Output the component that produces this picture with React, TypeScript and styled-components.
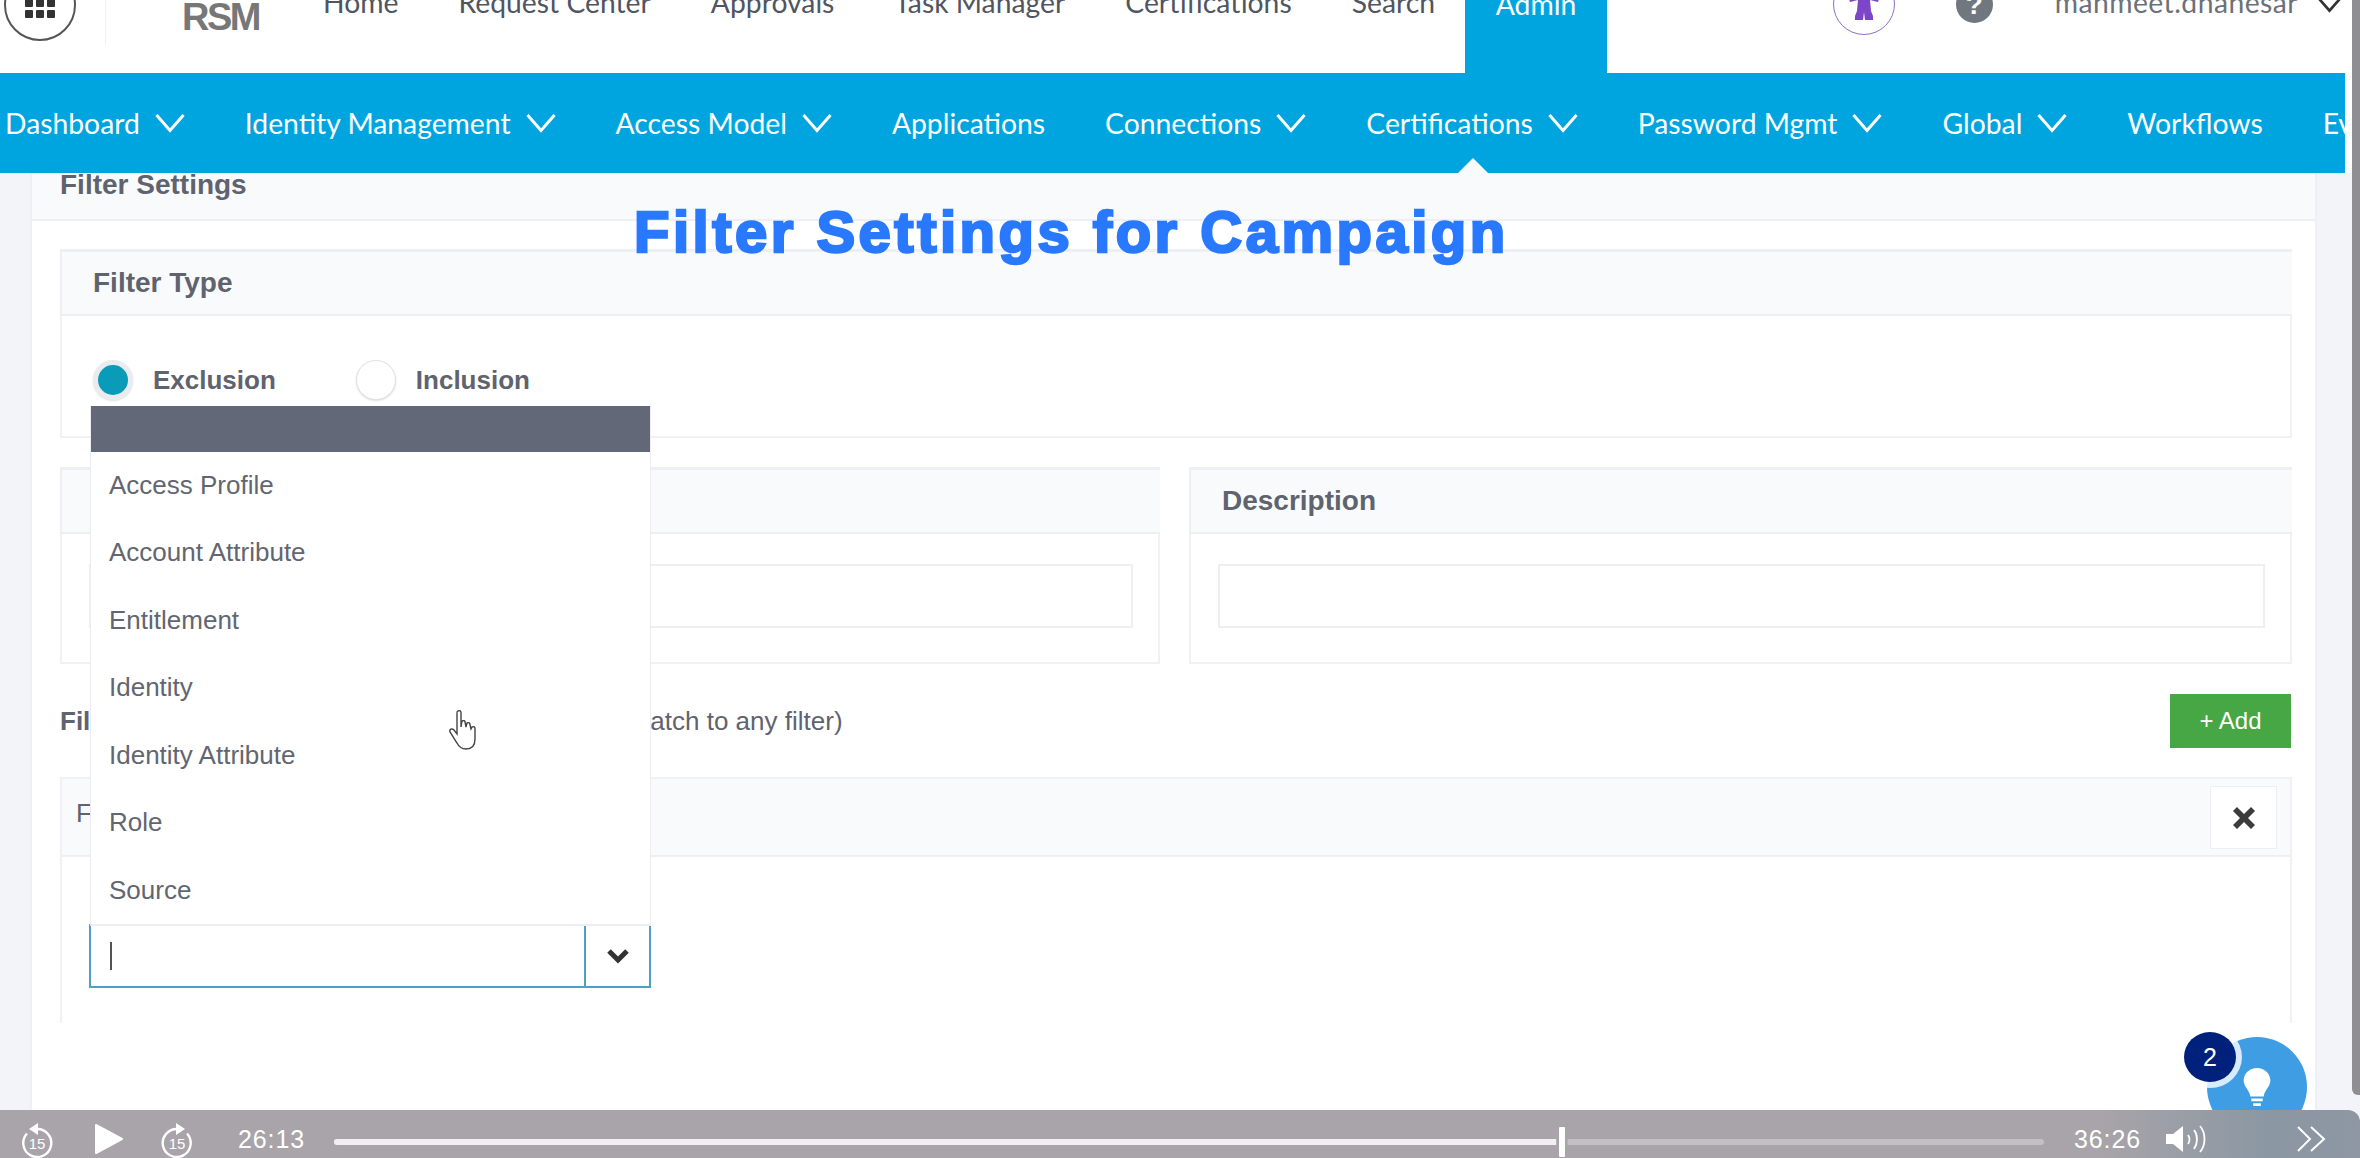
import React from 'react'
import styled, { createGlobalStyle } from 'styled-components'

const GlobalStyle = createGlobalStyle`
  html, body { margin: 0; padding: 0; background: #f3f4f9; overflow: hidden; }
  * { box-sizing: border-box; }
`

const Page = styled.div`
  position: relative;
  width: 2360px;
  height: 1158px;
  overflow: hidden;
  display: flex;
  flex-direction: column;
  background: #f3f4f9;
  font-family: "Liberation Sans", Arial, sans-serif;
  color: #5f636e;
`

const TopArea = styled.div`
  width: 2352px;
  flex: none;
  background: #fff;
`

const Header = styled.header`
  height: 73px;
  display: flex;
  align-items: flex-start;
  padding-right: 9px;
  background: #fff;
  overflow: hidden;
  font-family: Lato, "Noto Sans", sans-serif;
  font-size: 28.3px;
`

const AppsButton = styled.div`
  width: 72px;
  height: 72px;
  margin: -31px 0 0 4px;
  flex: none;
  border: 2px solid #555;
  border-radius: 50%;
  display: flex;
  align-items: flex-end;
  justify-content: center;
  padding-bottom: 21px;
`

const AppsGrid = styled.div`
  display: grid;
  grid-template-columns: repeat(3, 8px);
  gap: 3px;
  div { height: 8px; background: #333; border-radius: 1px; }
`

const HeaderDivider = styled.div`
  width: 1px;
  height: 45px;
  margin-left: 29px;
  flex: none;
  background: #f1f1f3;
`

const Logo = styled.div`
  width: 78px;
  margin-left: 76px;
  flex: none;
  font-family: "Liberation Sans", Arial, sans-serif;
  font-weight: 700;
  font-size: 38px;
  line-height: 34px;
  letter-spacing: -2.5px;
  color: #777;
`

const TopLinks = styled.nav`
  display: flex;
  gap: 60px;
  margin-left: 63px;
  margin-top: -15px;
  line-height: 34px;
  color: #50555f;
`

const TopLink = styled.div`
  white-space: nowrap;
`

const AdminTab = styled.div`
  width: 142px;
  height: 73px;
  flex: none;
  margin-left: 30px;
  margin-top: 0;
  background: #00a5df;
  color: #fff;
  text-align: center;
  line-height: 4px;
  padding-top: 2px;
`

const HeaderRight = styled.div`
  margin-left: auto;
  display: flex;
  align-items: flex-start;
`

const Avatar = styled.div`
  width: 62px;
  height: 62px;
  margin-top: -27px;
  flex: none;
  border: 1.5px solid #8a6fc0;
  border-radius: 50%;
  display: flex;
  align-items: flex-end;
  justify-content: center;
  padding-bottom: 14px;
`

const HelpDot = styled.div`
  width: 37px;
  height: 37px;
  margin: -14px 0 0 61px;
  flex: none;
  border-radius: 50%;
  background: #71777f;
  color: #fff;
  font-family: "Liberation Sans", Arial, sans-serif;
  font-weight: 700;
  font-size: 28px;
  line-height: 37px;
  text-align: center;
`

const UserName = styled.div`
  margin: -15px 0 0 62px;
  line-height: 34px;
  letter-spacing: 0.45px;
  color: #6c7179;
  white-space: nowrap;
`

const UserCaret = styled.div`
  margin: -6px 0 0 18px;
  flex: none;
  width: 27px;
  display: flex;
`

const NavBar = styled.nav`
  position: relative;
  height: 100px;
  width: 2345px;
  padding-left: 5px;
  display: flex;
  align-items: center;
  gap: 60px;
  background: #00a5df;
  color: #fff;
  font-family: Lato, "Noto Sans", sans-serif;
  font-size: 28.3px;
  overflow: hidden;
`

const NavItem = styled.div`
  display: flex;
  align-items: center;
  gap: 15px;
  white-space: nowrap;
  flex: none;
`

const NavChevron = styled.svg`
  flex: none;
`

const NavNotch = styled.div`
  position: absolute;
  left: 1458px;
  bottom: 0;
  width: 0;
  height: 0;
  border-left: 15px solid transparent;
  border-right: 15px solid transparent;
  border-bottom: 15px solid #f9fafc;
`

const Main = styled.main`
  position: relative;
  flex: 1;
  min-height: 0;
  overflow: hidden;
  display: flex;
`

const Card = styled.section`
  width: 2287px;
  margin-left: 30px;
  flex: none;
  background: #fff;
  border-left: 2px solid #eff0f5;
  border-right: 2px solid #eff0f5;
`

const CardHeader = styled.div`
  height: 48px;
  padding-left: 28px;
  background: #f9fafc;
  border-bottom: 2px solid #eeeff3;
  font-size: 28px;
  font-weight: 700;
  line-height: 24px;
`

const CardBody = styled.div`
  padding: 28px 23px 0 28px;
`

const Panel = styled.div`
  background: #fff;
  border: 2px solid #f0f1f5;
`

const PanelHeader = styled.div`
  height: 67px;
  padding-left: 31px;
  display: flex;
  align-items: center;
  background: #f9fafc;
  border-bottom: 2px solid #eeeff3;
  font-size: 28px;
  font-weight: 700;
  margin: -2px -2px 0;
  border-top: 3px solid #eeeff3;
  border-left: 2px solid #eeeff3;
`

const RadioRow = styled.div`
  height: 120px;
  padding: 44px 0 0 31px;
  display: flex;
  align-items: flex-start;
`

const RadioOption = styled.div`
  display: flex;
  align-items: center;
  gap: 20px;
  margin-right: 80px;
  font-size: 26px;
  font-weight: 700;
`

const RadioMark = styled.div<{ $on?: boolean }>`
  width: 40px;
  height: 40px;
  border-radius: 50%;
  flex: none;
  border: ${p => (p.$on ? '5px solid #e9ebef' : '1px solid #dfe0e4')};
  background: ${p => (p.$on ? '#0a9bb9' : '#fff')};
  box-shadow: 0 1px 2px rgba(0, 0, 0, 0.12);
`

const TwoCols = styled.div`
  display: grid;
  grid-template-columns: 1100px 1fr;
  gap: 29px;
  margin-top: 29px;
`

const FieldBody = styled.div`
  height: 128px;
  padding: 30px 25px 0 27px;
`

const TextBox = styled.div`
  height: 64px;
  border: 2px solid #eeeff3;
  background: #fff;
`

const AddRow = styled.div`
  height: 54px;
  margin-top: 30px;
  padding-right: 1px;
  display: flex;
  align-items: center;
  justify-content: space-between;
  font-size: 26px;
`

const AddLabel = styled.div`
  display: flex;
  align-items: center;
`

const AddTitle = styled.span`
  font-weight: 700;
`

const AddNote = styled.span`
  margin-left: 482px;
`

const AddButton = styled.div`
  width: 121px;
  height: 54px;
  background: #46a744;
  color: #fff;
  font-size: 24px;
  line-height: 54px;
  text-align: center;
`

const FilterPanel = styled.div`
  height: 246px;
  margin-top: 29px;
  border: 2px solid #f0f1f5;
  border-bottom: 0;
`

const FilterHeader = styled.div`
  height: 78px;
  padding: 7px 13px 0 14px;
  display: flex;
  justify-content: space-between;
  background: #f9fafc;
  border-bottom: 2px solid #eeeff3;
  font-size: 26px;
  line-height: 54px;
`

const CloseButton = styled.div`
  width: 67px;
  height: 63px;
  background: #fff;
  border: 1px solid #eeeff3;
  display: flex;
  align-items: center;
  justify-content: center;
`

const FilterBody = styled.div`
  padding: 67px 0 0 27px;
`

const Combo = styled.div`
  position: relative;
  width: 562px;
  height: 64px;
  display: flex;
  background: #fff;
  border: 2px solid #4f9fc6;
`

const ComboInput = styled.div`
  flex: 1;
  padding: 16px 0 0 19px;
`

const Caret = styled.div`
  width: 2px;
  height: 28px;
  background: #555;
`

const ComboToggle = styled.div`
  width: 65px;
  border-left: 2px solid #4f9fc6;
  display: flex;
  align-items: center;
  justify-content: center;
`

const Menu = styled.div`
  position: absolute;
  left: -1px;
  right: -2px;
  bottom: 100%;
  background: #fff;
  border-left: 1px solid #ededf1;
  border-right: 1px solid #ededf1;
  border-bottom: 2px solid #eeeff3;
`

const MenuHead = styled.div`
  height: 46px;
  background: #626877;
`

const MenuItem = styled.div`
  height: 67.5px;
  padding-left: 18px;
  font-size: 26px;
  line-height: 67.5px;
  color: #626670;
`

const HandCursor = styled.svg`
  position: absolute;
  left: 447px;
  top: 536px;
`

const Title = styled.div`
  position: absolute;
  left: 634px;
  top: 25px;
  font-size: 58px;
  font-weight: 700;
  line-height: 68px;
  letter-spacing: 3.5px;
  color: #2979ff;
  -webkit-text-stroke: 2.5px #2979ff;
  white-space: nowrap;
`

const HelpBubble = styled.div`
  position: absolute;
  left: 2207px;
  top: 864px;
  width: 100px;
  height: 100px;
  border-radius: 50%;
  background: #3f9de3;
  display: flex;
  align-items: center;
  justify-content: center;
`

const CountBadge = styled.div`
  position: absolute;
  left: 2184px;
  top: 859px;
  width: 52px;
  height: 50px;
  border-radius: 50%;
  background: #00217b;
  color: #fff;
  box-shadow: 0 0 0 6px rgba(255, 255, 255, 0.8);
  font-size: 25px;
  line-height: 50px;
  text-align: center;
`

const Scrollbar = styled.div`
  position: absolute;
  right: 0;
  top: 0;
  width: 8px;
  height: 1095px;
  background: #8f8f93;
  border-radius: 0 0 0 6px;
`

const PlayerBar = styled.footer`
  position: relative;
  height: 48px;
  flex: none;
  padding: 10px 34px 0 21px;
  display: flex;
  align-items: center;
  color: #fff;
  background: linear-gradient(90deg, #a8a4a9 0, #a8a4a9 2100px, #8b97a3 2270px, #8e97a3 100%);
  border-radius: 0 12px 0 0;
  font-size: 25px;
`

const PlayIcon = styled.svg`
  flex: none;
  margin: 0 38px 0 42px;
`

const TimeLabel = styled.div<{ $left: number }>`
  flex: none;
  width: 65px;
  margin-left: ${p => p.$left}px;
  letter-spacing: 0.9px;
  white-space: nowrap;
`

const Track = styled.div`
  position: relative;
  width: 1710px;
  height: 6px;
  margin: 6px 30px 0 31px;
  flex: none;
  background: #c3bfc4;
  border-radius: 3px;
`

const TrackFill = styled.div`
  height: 100%;
  background: #f2eff3;
  border-radius: 3px 0 0 3px;
`

const TrackThumb = styled.div`
  position: absolute;
  top: -12px;
  width: 6px;
  height: 30px;
  background: #fff;
  border-radius: 1px;
  box-shadow: 0 0 0 2.5px #a8a4a9;
`

const VolumeIcon = styled.svg`
  flex: none;
  margin-left: 26px;
`

const SpeedIcon = styled.svg`
  flex: none;
  margin-left: auto;
`

const SkipLabel = styled.text`
  font-family: "Liberation Sans", Arial, sans-serif;
  font-size: 15px;
  fill: #fff;
  text-anchor: middle;
`

const SkipIcon = ({ forward }: { forward?: boolean }) => (
  <svg width="32" height="38" viewBox="0 0 32 38" fill="none">
    <g transform={forward ? undefined : 'translate(32 0) scale(-1 1)'}>
      <path d="M26 13.5A14 14 0 1 1 16 9" stroke="#fff" strokeWidth="2.4" />
      <path d="M15 3l9 6-9 6z" fill="#fff" />
    </g>
    <SkipLabel x="16" y="28.5">15</SkipLabel>
  </svg>
)

const Chevron = ({ color = '#fff', width = 30 }: { color?: string; width?: number }) => (
  <NavChevron width={width} height="20" viewBox="0 0 30 20" fill="none">
    <path d="M1.5 2 15 17.5 28.5 2" stroke={color} strokeWidth="3" />
  </NavChevron>
)

const navItems = [
  { label: 'Dashboard', caret: true },
  { label: 'Identity Management', caret: true },
  { label: 'Access Model', caret: true },
  { label: 'Applications' },
  { label: 'Connections', caret: true },
  { label: 'Certifications', caret: true },
  { label: 'Password Mgmt', caret: true },
  { label: 'Global', caret: true },
  { label: 'Workflows' },
  { label: 'Events' },
]

const options = ['Access Profile', 'Account Attribute', 'Entitlement', 'Identity', 'Identity Attribute', 'Role', 'Source']

export default function App() {
  return (
    <Page>
      <GlobalStyle />
      <TopArea>
        <Header>
          <AppsButton>
            <AppsGrid>
              {Array.from({ length: 9 }).map((_, i) => <div key={i} />)}
            </AppsGrid>
          </AppsButton>
          <HeaderDivider />
          <Logo>RSM</Logo>
          <TopLinks>
            <TopLink>Home</TopLink>
            <TopLink>Request Center</TopLink>
            <TopLink>Approvals</TopLink>
            <TopLink>Task Manager</TopLink>
            <TopLink>Certifications</TopLink>
            <TopLink>Search</TopLink>
          </TopLinks>
          <AdminTab>Admin</AdminTab>
          <HeaderRight>
            <Avatar>
              <svg width="34" height="30" viewBox="0 0 34 30" fill="#7d45c7">
                <path d="M10 6h14l8 3-1 3-8-2 1 11 2 5v4h-8l-1-8-1 8h-8v-4l2-5 1-11-8 2-1-3z" />
              </svg>
            </Avatar>
            <HelpDot>?</HelpDot>
            <UserName>manmeet.dhanesar</UserName>
            <UserCaret><Chevron color="#333" width={27} /></UserCaret>
          </HeaderRight>
        </Header>
        <NavBar>
          {navItems.map(item => (
            <NavItem key={item.label}>
              {item.label}
              {item.caret && <Chevron />}
            </NavItem>
          ))}
          <NavNotch />
        </NavBar>
      </TopArea>
      <Main>
        <Card>
          <CardHeader>Filter Settings</CardHeader>
          <CardBody>
            <Panel>
              <PanelHeader>Filter Type</PanelHeader>
              <RadioRow>
                <RadioOption><RadioMark $on />Exclusion</RadioOption>
                <RadioOption><RadioMark />Inclusion</RadioOption>
              </RadioRow>
            </Panel>
            <TwoCols>
              <Panel>
                <PanelHeader />
                <FieldBody><TextBox /></FieldBody>
              </Panel>
              <Panel>
                <PanelHeader>Description</PanelHeader>
                <FieldBody><TextBox /></FieldBody>
              </Panel>
            </TwoCols>
            <AddRow>
              <AddLabel>
                <AddTitle>Filters</AddTitle>
                <AddNote>(match to any filter)</AddNote>
              </AddLabel>
              <AddButton>+ Add</AddButton>
            </AddRow>
            <FilterPanel>
              <FilterHeader>
                F
                <CloseButton>
                  <svg width="24" height="24" viewBox="0 0 24 24">
                    <path d="M5 1l7 7 7-7 4 4-7 7 7 7-4 4-7-7-7 7-4-4 7-7-7-7z" fill="#3c3c3c" />
                  </svg>
                </CloseButton>
              </FilterHeader>
              <FilterBody>
                <Combo>
                  <Menu>
                    <MenuHead />
                    {options.map(o => <MenuItem key={o}>{o}</MenuItem>)}
                  </Menu>
                  <ComboInput><Caret /></ComboInput>
                  <ComboToggle>
                    <svg width="24" height="16" viewBox="0 0 24 16" fill="none">
                      <path d="M3 3l9 9 9-9" stroke="#333" strokeWidth="5" />
                    </svg>
                  </ComboToggle>
                </Combo>
              </FilterBody>
            </FilterPanel>
          </CardBody>
        </Card>
        <Title>Filter Settings for Campaign</Title>
        <HandCursor width="32" height="42" viewBox="0 0 32 42">
          <path
            d="M11 2c2-1 3 0 3 2v14l1-6c2-1 3 0 3 1l1 5 1-4c2-1 3 0 3 2l1 4 1-2c2-1 3 0 3 2v10c0 6-3 10-9 10-5 0-7-2-9-6L3 23c-1-3 2-4 4-2l3 4V4c0-1 0-2 1-2z"
            fill="#fff"
            stroke="#444"
            strokeWidth="1.4"
          />
        </HandCursor>
        <HelpBubble>
          <svg width="30" height="40" viewBox="0 0 30 42" fill="#fff">
            <path d="M15 1c8 0 14 6 14 13 0 7-6 10-7 17H8C7 24 1 21 1 14 1 7 7 1 15 1z" />
            <path d="M9 33h12v3H9zM11 38h8v3h-8z" />
          </svg>
        </HelpBubble>
        <CountBadge>2</CountBadge>
      </Main>
      <PlayerBar>
        <SkipIcon />
        <PlayIcon width="28" height="32" viewBox="0 0 28 32">
          <path d="M1 2l26 14L1 30z" fill="#fff" stroke="#fff" strokeWidth="2" strokeLinejoin="round" />
        </PlayIcon>
        <SkipIcon forward />
        <TimeLabel $left={45}>26:13</TimeLabel>
        <Track>
          <TrackFill style={{ width: `${(1222 / 1710) * 100}%` }} />
          <TrackThumb style={{ left: 1225 }} />
        </Track>
        <TimeLabel $left={0}>36:26</TimeLabel>
        <VolumeIcon width="42" height="30" viewBox="0 0 42 30" fill="none">
          <path d="M1 10h7l10-8v26l-10-8H1z" fill="#fff" />
          <path d="M23 11c2 3 2 6 0 9M29 6c4 5 4 13 0 19M35 2c6 7 6 19 0 26" stroke="#fff" strokeWidth="1.8" />
        </VolumeIcon>
        <SpeedIcon width="30" height="28" viewBox="0 0 30 28" fill="none" stroke="#fff" strokeWidth="2">
          <path d="M2 2l12 12L2 26M15 2l13 12-13 12" />
        </SpeedIcon>
      </PlayerBar>
      <Scrollbar />
    </Page>
  )
}
